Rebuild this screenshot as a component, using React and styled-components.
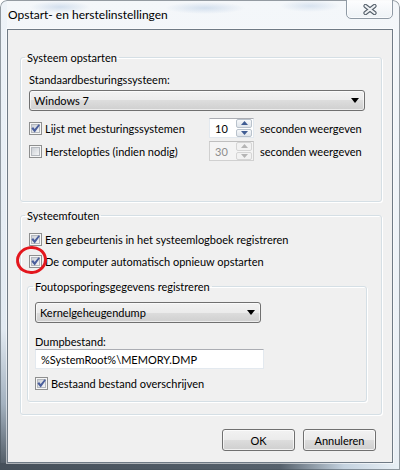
import React from "react";
import styled, { createGlobalStyle } from "styled-components";

const Global = createGlobalStyle`
  html, body { margin: 0; padding: 0; }
  body { font-family: Lato, "Liberation Sans", sans-serif; font-size: 11px; color: #000; }
`;

const Window = styled.div`
  position: relative;
  width: 400px;
  height: 470px;
  box-sizing: border-box;
  display: flex;
  flex-direction: column;
  border-radius: 7px 7px 0 0;
  overflow: hidden;
  white-space: nowrap;
  background:
    linear-gradient(to right, #46505a 0%, #56616c 70%, #c4d2df 86%, #eaf1f7 100%) left bottom / 100% 7px no-repeat,
    linear-gradient(to bottom, #eef3f8 0%, #e2eaf2 70%, #a3b1bf 86%, #4a545e 100%) left top / 7px 100% no-repeat,
    radial-gradient(ellipse 30px 6px at 60px 7px, rgba(150,180,215,0.35), transparent),
    radial-gradient(ellipse 40px 6px at 205px 8px, rgba(150,180,215,0.35), transparent),
    radial-gradient(ellipse 30px 6px at 310px 6px, rgba(150,180,215,0.3), transparent),
    linear-gradient(to bottom, #f4f7fa 0%, #e9eff5 100%);
  box-shadow: inset 0 0 0 1px rgba(70, 80, 90, 0.55);
`;

const TitleBar = styled.div`
  height: 29px;
  flex: none;
  display: flex;
  align-items: flex-start;
  justify-content: space-between;
  padding: 0 7px 0 8px;
`;

const Title = styled.div`
  margin-top: 7px;
  font-size: 12px;
  line-height: 15px;
`;

const CloseButton = styled.div`
  width: 47px;
  height: 20px;
  margin-top: -1px;
  box-sizing: border-box;
  border: 1px solid #8f9aa5;
  border-radius: 0 0 5px 5px;
  background: linear-gradient(to bottom, rgba(255,255,255,0.85), rgba(235,240,245,0.7));
  box-shadow: inset 0 0 0 1px rgba(255,255,255,0.7);
  display: flex;
  align-items: center;
  justify-content: center;
`;

const Client = styled.div`
  flex: 1;
  margin: 0 7px 7px 7px;
  box-sizing: border-box;
  border: 1px solid #6f7a85;
  box-shadow: 0 0 0 1px rgba(255,255,255,0.55);
  background: #f0f0f0;
  padding: 20px 10px 11px 12px;
  display: flex;
  flex-direction: column;
`;

const Group = styled.fieldset`
  margin: ${(p) => p.$margin || "0"};
  padding: ${(p) => p.$padding};
  border: 1px solid #d5dfe5;
  border-radius: 3px;
  box-shadow: inset 1px 1px 0 #fff, 1px 1px 0 #fff;
  min-width: 0;
  display: flex;
  flex-direction: column;
`;

const Legend = styled.legend`
  margin-left: ${(p) => p.$offset}px;
  padding: 0 2px;
  font-size: 11px;
  line-height: 15px;
`;

const Label = styled.div`
  line-height: ${(p) => p.$lh || 15}px;
  margin-top: ${(p) => p.$mt || 0}px;
`;

const Combo = styled.div`
  width: ${(p) => p.$w}px;
  height: 21px;
  margin-top: ${(p) => p.$mt || 0}px;
  box-sizing: border-box;
  border: 1px solid #707070;
  border-radius: 3px;
  background: linear-gradient(to bottom, #f2f2f2 0%, #ebebeb 50%, #dddddd 50%, #cfcfcf 100%);
  box-shadow: inset 0 0 0 1px rgba(255,255,255,0.6);
  display: flex;
  align-items: center;
  justify-content: space-between;
  padding: 0 5px 0 4px;
`;

const TextBox = styled.div`
  width: 229px;
  height: 20px;
  box-sizing: border-box;
  border: 1px solid #e3e9ef;
  border-top-color: #abadb3;
  background: #fff;
  padding-left: 5px;
  display: flex;
  align-items: center;
`;

const SpinRows = styled.div`
  display: grid;
  grid-template-columns: 174px 45px auto;
  grid-auto-rows: 20px;
  row-gap: 3px;
  column-gap: 6px;
  margin-top: 7px;
  align-items: center;
`;

const CheckRow = styled.div`
  display: flex;
  align-items: center;
  height: 16px;
  margin-top: ${(p) => p.$mt || 0}px;
  margin-left: ${(p) => p.$ml || 0}px;
  gap: 3px;
`;

const CheckWrap = styled.span`
  position: relative;
  width: 13px;
  height: 13px;
  flex: none;
  display: inline-flex;
`;

const RedCircle = styled.span`
  position: absolute;
  left: -13px;
  top: -9px;
  width: 31px;
  height: 28px;
  box-sizing: border-box;
  border: 3px solid #e3161d;
  border-radius: 50%;
  transform: rotate(-8deg);
  pointer-events: none;
`;

const Spin = styled.div`
  width: 45px;
  height: 20px;
  box-sizing: border-box;
  border: 1px solid ${(p) => (p.$disabled ? "#d0d0d0" : "#e3e9ef")};
  border-top-color: ${(p) => (p.$disabled ? "#bfbfbf" : "#abadb3")};
  background: ${(p) => (p.$disabled ? "#f4f4f4" : "#fff")};
  color: ${(p) => (p.$disabled ? "#8d8d8d" : "#000")};
  display: flex;
  align-items: stretch;
`;

const SpinValue = styled.div`
  flex: 1;
  padding-left: 5px;
  display: flex;
  align-items: center;
`;

const SpinButtons = styled.div`
  width: 16px;
  display: flex;
  flex-direction: column;
  gap: 1px;
  padding: 0 1px 0 0;
`;

const SpinBtn = styled.div`
  flex: 1;
  box-sizing: border-box;
  border: 1px solid ${(p) => (p.$disabled ? "#d5d5d5" : "#b9c2cc")};
  border-radius: 2px;
  background: ${(p) =>
    p.$disabled ? "#f2f2f2" : "linear-gradient(to bottom, #f6f8fa, #dfe4ea)"};
  display: flex;
  align-items: center;
  justify-content: center;
`;

const ButtonRow = styled.div`
  display: flex;
  justify-content: flex-end;
  gap: 8px;
  margin-top: 14px;
  margin-right: 6px;
`;

const Button = styled.div`
  width: 73px;
  height: 22px;
  box-sizing: border-box;
  border: 1px solid #707070;
  border-radius: 3px;
  background: linear-gradient(to bottom, #f2f2f2 0%, #ebebeb 50%, #dddddd 50%, #cfcfcf 100%);
  box-shadow: inset 0 0 0 1px rgba(255,255,255,0.7);
  display: flex;
  align-items: center;
  justify-content: center;
`;

function CheckBox({ checked }) {
  return (
    <svg width="13" height="13" viewBox="0 0 13 13">
      <defs>
        <linearGradient id="cbg" x1="0" y1="0" x2="1" y2="1">
          <stop offset="0" stopColor="#c9cdd3" />
          <stop offset="1" stopColor="#f6f7f8" />
        </linearGradient>
      </defs>
      <rect x="0.5" y="0.5" width="12" height="12" fill="#f6f6f6" stroke="#8e8f8f" />
      <rect x="2.5" y="2.5" width="8" height="8" fill="url(#cbg)" stroke="#b4b8be" />
      {checked && (
        <path d="M2.4 6.6 L4.1 5.1 L5.6 7.1 L9.6 2.2 L10.9 3.3 L5.7 10.4 Z" fill="#4a5e9c" />
      )}
    </svg>
  );
}

function Arrow({ up, color }) {
  return (
    <svg width="7" height="4" viewBox="0 0 7 4">
      <path d={up ? "M0 4 L3.5 0 L7 4 Z" : "M0 0 L7 0 L3.5 4 Z"} fill={color} />
    </svg>
  );
}

function ComboArrow() {
  return (
    <svg width="8" height="5" viewBox="0 0 8 5">
      <path d="M0 0 L8 0 L4 5 Z" fill="#000" />
    </svg>
  );
}

function SpinBox({ value, disabled }) {
  const c = disabled ? "#b5b5b5" : "#3f5c93";
  return (
    <Spin $disabled={disabled}>
      <SpinValue>{value}</SpinValue>
      <SpinButtons>
        <SpinBtn $disabled={disabled}><Arrow up color={c} /></SpinBtn>
        <SpinBtn $disabled={disabled}><Arrow color={c} /></SpinBtn>
      </SpinButtons>
    </Spin>
  );
}

export default function App() {
  return (
    <>
      <Global />
      <Window>
        <TitleBar>
          <Title>Opstart- en herstelinstellingen</Title>
          <CloseButton>
            <svg width="14" height="11" viewBox="0 0 14 11">
              <path d="M2.5 2 L11.5 9 M11.5 2 L2.5 9" stroke="#55606b" strokeWidth="4.2" strokeLinecap="round" />
              <path d="M2.5 2 L11.5 9 M11.5 2 L2.5 9" stroke="#eef1f4" strokeWidth="2.2" strokeLinecap="round" />
            </svg>
          </CloseButton>
        </TitleBar>
        <Client>
          <Group $padding="7px 16px 40px 8px">
            <Legend $offset={-4}>Systeem opstarten</Legend>
            <Label>Standaardbesturingssysteem:</Label>
            <Combo $w={336} $mt={3}>
              <span>Windows 7</span>
              <ComboArrow />
            </Combo>
            <SpinRows>
              <CheckRow>
                <CheckWrap><CheckBox checked /></CheckWrap>
                Lijst met besturingssystemen
              </CheckRow>
              <SpinBox value="10" />
              <span>seconden weergeven</span>
              <CheckRow>
                <CheckWrap><CheckBox /></CheckWrap>
                Herstelopties (indien nodig)
              </CheckRow>
              <SpinBox value="30" disabled />
              <span>seconden weergeven</span>
            </SpinRows>
          </Group>
          <Group $margin="6px 0 0 0" $padding="8px 14px 12px 8px">
            <Legend $offset={-4}>Systeemfouten</Legend>
            <CheckRow>
              <CheckWrap><CheckBox checked /></CheckWrap>
              Een gebeurtenis in het systeemlogboek registreren
            </CheckRow>
            <CheckRow $mt={6}>
              <CheckWrap>
                <CheckBox checked />
                <RedCircle />
              </CheckWrap>
              De computer automatisch opnieuw opstarten
            </CheckRow>
            <Group $margin="10px 0 0 -2px" $padding="8px 8px 10px 7px">
              <Legend $offset={-2}>Foutopsporingsgegevens registreren</Legend>
              <Combo $w={226}>
                <span>Kernelgeheugendump</span>
                <ComboArrow />
              </Combo>
              <Label $mt={12} $lh={14}>Dumpbestand:</Label>
              <TextBox>%SystemRoot%\MEMORY.DMP</TextBox>
              <CheckRow $mt={6}>
                <CheckWrap><CheckBox checked /></CheckWrap>
                Bestaand bestand overschrijven
              </CheckRow>
            </Group>
          </Group>
          <ButtonRow>
            <Button>OK</Button>
            <Button>Annuleren</Button>
          </ButtonRow>
        </Client>
      </Window>
    </>
  );
}
